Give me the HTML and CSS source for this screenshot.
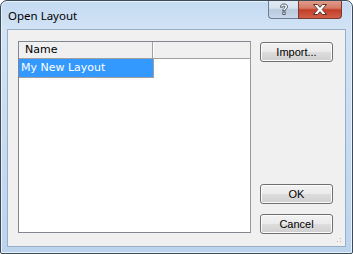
FILE: index.html
```html
<!DOCTYPE html>
<html>
<head>
<meta charset="utf-8">
<link rel="stylesheet" href="styles.css">
</head>
<body>
<div class="window">
  <div class="titlebar">
    <span class="title">Open Layout</span>
    <div class="caption-btns">
      <div class="cbtn help">
        <svg width="12" height="13" viewBox="0 0 12 13"><path d="M2.5 4.2 C2.5 1.8 4 1 6 1 C8 1 9.5 2 9.5 3.8 C9.5 5.6 7.2 6 7.2 7.8 L4.8 7.8 C4.8 5.4 7 5.2 7 3.9 C7 3.2 6.6 2.9 6 2.9 C5.3 2.9 5 3.4 5 4.2 Z M4.8 9 L7.2 9 L7.2 11.5 L4.8 11.5 Z" fill="#fff" stroke="#3a4a5c" stroke-width="0.9"/></svg>
      </div>
      <div class="cbtn close">
        <svg width="16" height="13" viewBox="0 0 16 13"><path d="M1.5 1.5 L5.5 1.5 L8 4.3 L10.5 1.5 L14.5 1.5 L10.2 6.5 L14.5 11.5 L10.5 11.5 L8 8.7 L5.5 11.5 L1.5 11.5 L5.8 6.5 Z" fill="#fff" stroke="#4a2420" stroke-width="0.9" stroke-linejoin="round"/></svg>
      </div>
    </div>
  </div>
  <div class="client">
    <div class="listbox">
      <div class="header">
        <div class="col-name">Name</div>
        <div class="col-rest"></div>
      </div>
      <div class="row selected">My New Layout</div>
    </div>
    <div class="actions">
      <button class="btn">Import...</button>
      <div class="spacer"></div>
      <button class="btn">OK</button>
      <button class="btn">Cancel</button>
    </div>
    <div class="grip"></div>
  </div>
</div>
</body>
</html>
```
FILE: styles.css
```css
* { box-sizing: border-box; }
body { margin: 0; background: #fff; }
.window {
  width: 353px;
  height: 254px;
  border: 1px solid #3d4a58;
  border-radius: 7px 7px 2px 2px;
  background: linear-gradient(to bottom, #c4daf2 0px, #d3e3f5 30px, #c9dcf2 120px, #bcd3ee 254px);
  display: flex;
  flex-direction: column;
  overflow: hidden;
  box-shadow: inset 0 0 0 1px #e9f2fb;
}
.titlebar {
  height: 28px;
  display: flex;
  align-items: flex-start;
  padding-left: 7px;
  padding-right: 10px;
}
.title {
  font-family: "Noto Sans", "DejaVu Sans", sans-serif;
  font-size: 11.5px;
  color: #000;
  margin-top: 7px;
}
.caption-btns {
  margin-left: auto;
  display: flex;
  margin-top: -1px;
}
.cbtn {
  height: 19px;
  display: flex;
  align-items: center;
  justify-content: center;
  border: 1px solid #6d7f96;
  border-top: none;
}
.help {
  width: 30px;
  border-radius: 0 0 0 4px;
  border-right: none;
  background: linear-gradient(to bottom, #e3ebf4 0%, #d6e1ee 45%, #b9c9dc 55%, #c9d8ea 100%);
}
.close {
  width: 44px;
  border-radius: 0 0 4px 0;
  border-color: #7a3a30;
  background: linear-gradient(to bottom, #e2a090 0%, #d57a66 45%, #c43d26 55%, #d0604a 100%);
}
.client {
  flex: 1;
  margin: 0 6px 6px 6px;
  border: 1px solid #97aec9;
  background: #f0f0f0;
  display: flex;
  padding: 11px 10px 12px 10px;
  gap: 9px;
  position: relative;
}
.listbox {
  width: 233px;
  height: 192px;
  border: 1px solid #828790;
  background: #fff;
  border-right-color: #9a9a9a;
}
.header {
  display: flex;
  height: 17px;
  background: #f0f0f0;
  border-bottom: 1px solid #a0a0a0;
}
.col-name {
  width: 134px;
  border-right: 1px solid #a0a0a0;
  font-family: "DejaVu Sans", Verdana, sans-serif;
  font-size: 11px;
  padding-left: 6px;
  line-height: 16px;
  color: #000;
}
.col-rest { flex: 1; border-left: 1px solid #fff; }
.row {
  width: 135px;
  height: 19px;
  font-family: "DejaVu Sans", Verdana, sans-serif;
  font-size: 11px;
  line-height: 18px;
  padding-left: 2px;
}
.selected {
  background: #3399ff;
  color: #fff;
  border-right: 1px solid #a0a0a0;
  border-bottom: 1px solid #a0a0a0;
}
.actions {
  display: flex;
  flex-direction: column;
  gap: 10px;
  padding-top: 1px;
}
.spacer { flex: 1; }
.btn {
  width: 73px;
  height: 20px;
  margin: 0;
  padding: 0;
  border: 1px solid #707070;
  border-radius: 3px;
  background: linear-gradient(to bottom, #f2f2f2 0%, #ebebeb 48%, #dddddd 52%, #cfcfcf 100%);
  box-shadow: inset 0 0 0 1px #fcfcfc;
  font-family: "Liberation Sans", Arial, sans-serif;
  font-size: 11px;
  color: #000;
}
.grip {
  position: absolute;
  right: 2px;
  bottom: 2px;
  width: 10px;
  height: 10px;
  background:
    radial-gradient(circle, #b8b8b8 0.8px, transparent 1px) 0 0 / 3px 3px;
  clip-path: polygon(100% 0, 100% 100%, 0 100%);
}
```
